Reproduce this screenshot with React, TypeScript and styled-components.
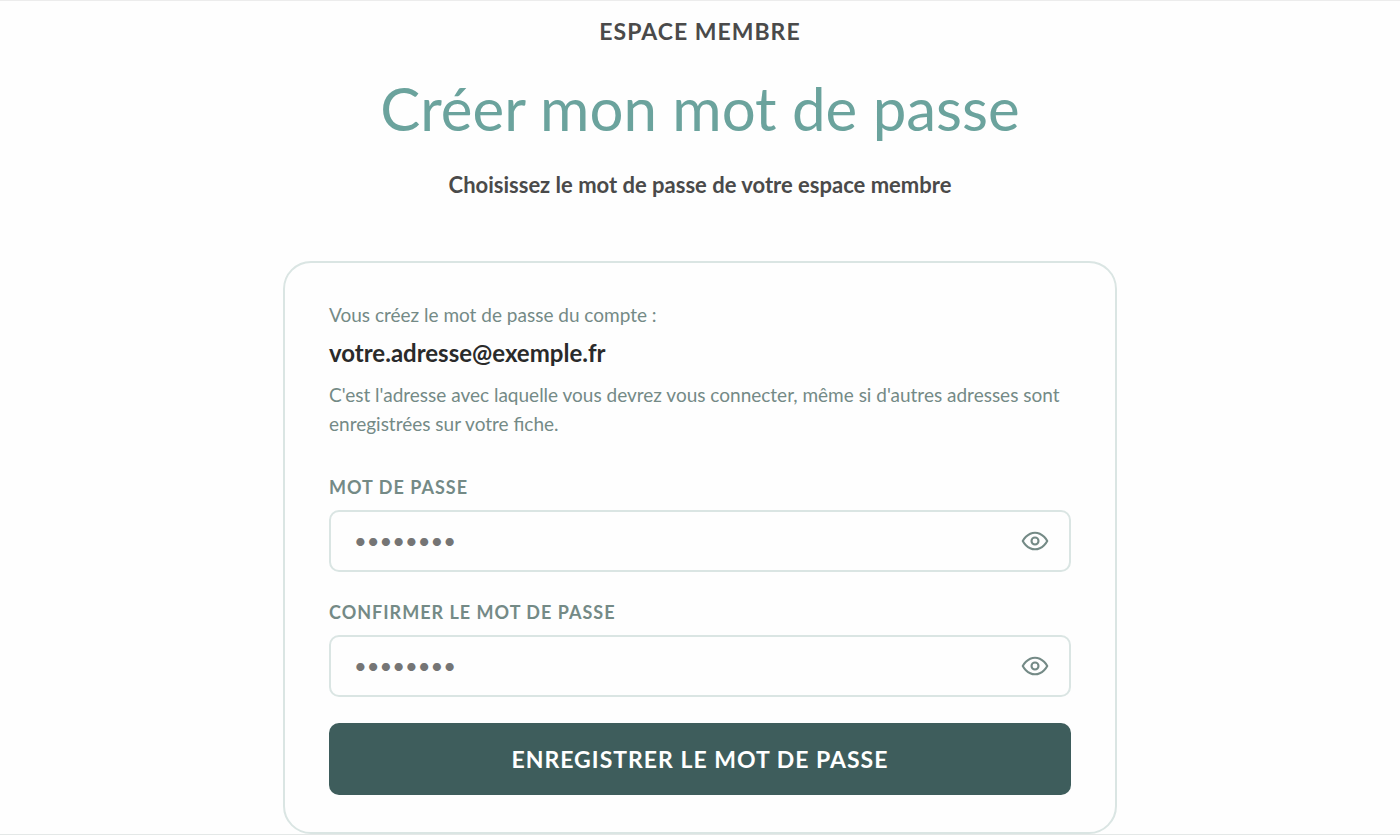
import React, { useState } from "react";
import styled, { createGlobalStyle } from "styled-components";

const GlobalStyle = createGlobalStyle`
  *, *::before, *::after { box-sizing: border-box; }
  body {
    margin: 0;
    background: #fefefe;
    color: #4a4a4a;
    font-family: Lato, "Liberation Sans", sans-serif;
  }
`;

const Page = styled.main`
  display: flex;
  flex-direction: column;
  align-items: center;
  border-top: 1px solid #ececec;
  border-bottom: 1px solid #e4e8e7;
  padding-top: 12px;
`;

const Header = styled.header`
  display: flex;
  flex-direction: column;
  align-items: center;
  text-align: center;
`;

const Eyebrow = styled.p`
  margin: 0;
  font-size: 23px;
  line-height: 36px;
  font-weight: 700;
  letter-spacing: 1px;
`;

const Title = styled.h1`
  margin: 22px 0 0;
  font-size: 60px;
  line-height: 74px;
  font-weight: 400;
  color: #6ba39d;
`;

const Subtitle = styled.p`
  margin: 22px 0 0;
  font-size: 22px;
  line-height: 36px;
  font-weight: 700;
`;

const Card = styled.form`
  width: 100%;
  max-width: 834px;
  margin-top: 58px;
  padding: 37px 44px;
  border: 2px solid #dae5e3;
  border-radius: 28px;
`;

const Note = styled.p`
  margin: 0;
  font-size: 19px;
  line-height: 29px;
  color: #748a86;
`;

const Email = styled.p`
  margin: 8px 0 11px;
  font-size: 24px;
  line-height: 32px;
  font-weight: 700;
  color: #2a2a2a;
`;

const Fields = styled.div`
  display: flex;
  flex-direction: column;
  gap: 26px;
  margin-top: 35px;
`;

const Field = styled.div`
  display: flex;
  flex-direction: column;
  gap: 8px;
`;

const Label = styled.label`
  font-size: 18px;
  line-height: 29px;
  font-weight: 700;
  letter-spacing: 1px;
  color: #748a86;
  text-transform: uppercase;
`;

const InputBox = styled.div`
  display: flex;
  align-items: center;
  height: 62px;
  padding: 0 20px 0 23px;
  border: 2px solid #dae5e3;
  border-radius: 10px;
`;

const Input = styled.input`
  flex: 1;
  min-width: 0;
  padding: 0;
  border: 0;
  outline: 0;
  background: transparent;
  font-family: inherit;
  font-size: 22px;
  line-height: 32px;
  color: #4a4a4a;
  &::placeholder { color: #757575; opacity: 1; }
`;

const Toggle = styled.button`
  display: flex;
  padding: 0;
  border: 0;
  background: transparent;
  color: #748a86;
  cursor: pointer;
`;

const Submit = styled.button`
  width: 100%;
  height: 72px;
  border: 0;
  border-radius: 10px;
  background: #3e5d5c;
  color: #fff;
  font-family: inherit;
  font-size: 23px;
  font-weight: 700;
  letter-spacing: 1px;
  text-transform: uppercase;
  cursor: pointer;
`;

function EyeIcon({ crossed }: { crossed: boolean }) {
  return (
    <svg
      width="28"
      height="28"
      viewBox="0 0 24 24"
      fill="none"
      stroke="currentColor"
      strokeWidth="1.8"
      strokeLinecap="round"
      strokeLinejoin="round"
      aria-hidden="true"
    >
      <path d="M1.5 12S5.2 4.9 12 4.9 22.5 12 22.5 12 18.8 19.1 12 19.1 1.5 12 1.5 12Z" />
      <circle cx="12" cy="12" r="3" />
      {crossed && <path d="M4 3l16 18" />}
    </svg>
  );
}

function PasswordField({ id, label }: { id: string; label: string }) {
  const [visible, setVisible] = useState(false);
  return (
    <Field>
      <Label htmlFor={id}>{label}</Label>
      <InputBox>
        <Input id={id} type={visible ? "text" : "password"} placeholder="••••••••" autoComplete="new-password" />
        <Toggle
          type="button"
          aria-label={visible ? "Masquer le mot de passe" : "Afficher le mot de passe"}
          onClick={() => setVisible(!visible)}
        >
          <EyeIcon crossed={visible} />
        </Toggle>
      </InputBox>
    </Field>
  );
}

export default function App() {
  return (
    <>
      <GlobalStyle />
      <Page>
        <Header>
          <Eyebrow>ESPACE MEMBRE</Eyebrow>
          <Title>Créer mon mot de passe</Title>
          <Subtitle>Choisissez le mot de passe de votre espace membre</Subtitle>
        </Header>
        <Card onSubmit={(event) => event.preventDefault()}>
          <Note>Vous créez le mot de passe du compte :</Note>
          <Email>votre.adresse@exemple.fr</Email>
          <Note>
            C'est l'adresse avec laquelle vous devrez vous connecter, même si d'autres adresses sont
            enregistrées sur votre fiche.
          </Note>
          <Fields>
            <PasswordField id="password" label="Mot de passe" />
            <PasswordField id="confirmation" label="Confirmer le mot de passe" />
            <Submit type="submit">Enregistrer le mot de passe</Submit>
          </Fields>
        </Card>
      </Page>
    </>
  );
}
